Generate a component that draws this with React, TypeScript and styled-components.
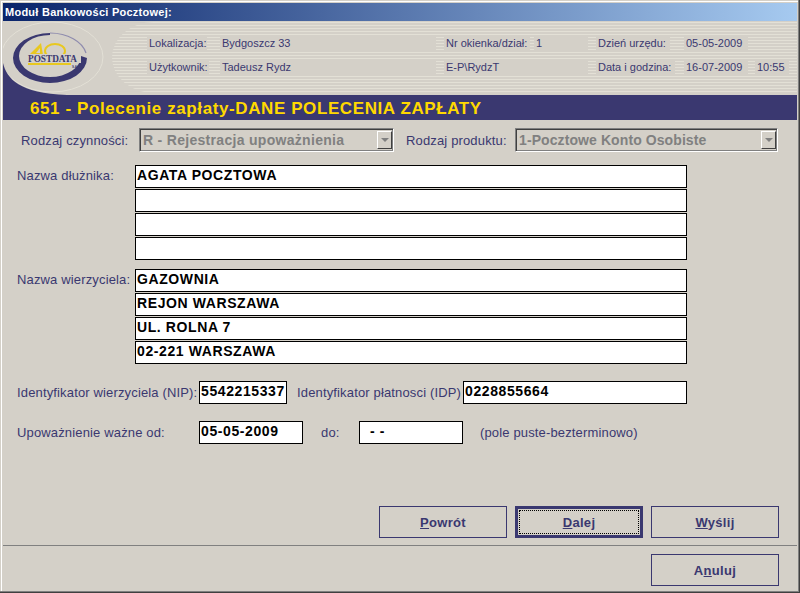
import styled, { createGlobalStyle } from "styled-components";

const NAVY = "#3a3870";
const FACE = "#d4d0c8";

const GlobalStyle = createGlobalStyle`
  html, body {
    margin: 0;
    padding: 0;
    background: ${FACE};
  }
  * {
    box-sizing: border-box;
  }
`;

const Window = styled.div`
  width: 800px;
  height: 593px;
  padding: 3px;
  display: flex;
  flex-direction: column;
  background: ${FACE};
  font-family: "Liberation Sans", Arial, sans-serif;
  overflow: hidden;
  box-shadow:
    inset -1px -1px 0 #404040,
    inset -2px -2px 0 #808080,
    inset 1px 1px 0 ${FACE},
    inset 2px 2px 0 #ffffff;
`;

const TitleBar = styled.div`
  height: 18px;
  flex: none;
  padding: 0 2px;
  display: flex;
  align-items: center;
  color: #fff;
  font-size: 11px;
  font-weight: bold;
  letter-spacing: 0.25px;
  background: linear-gradient(90deg, #0a246a, #a6caf0);
`;

const Header = styled.div`
  position: relative;
  height: 74px;
  flex: none;
  padding: 15px 0 0 144px;
  display: flex;
  flex-direction: column;
  gap: 9px;
`;

const Stripes = styled.div`
  position: absolute;
  inset: 1px 0 2px 109px;
  border-radius: 42px 0 0 42px / 36px 0 0 36px;
  background: repeating-linear-gradient(
    180deg,
    #e3e0d6 0,
    #e3e0d6 1px,
    ${FACE} 1px,
    ${FACE} 3px
  );
`;

const LogoArt = styled.svg`
  position: absolute;
  left: 0;
  top: 0;
`;

const InfoRow = styled.div`
  position: relative;
  height: 15px;
  display: flex;
`;

const InfoCell = styled.div<{ $width: number; $gap: number }>`
  width: ${(p) => p.$width}px;
  margin-right: ${(p) => p.$gap}px;
  padding-left: 2px;
  flex: none;
  background: ${FACE};
  color: ${NAVY};
  font-size: 11px;
  line-height: 15px;
  white-space: nowrap;
`;

const Band = styled.div`
  height: 25px;
  flex: none;
  padding-left: 27px;
  background: ${NAVY};
  color: #ffd800;
  font-size: 17px;
  font-weight: bold;
  line-height: 27px;
  letter-spacing: 0.6px;
  white-space: nowrap;
`;

const Body = styled.div`
  flex: 1;
  display: flex;
  flex-direction: column;
  padding: 8px 0 0 14px;
`;

const SelectRow = styled.div`
  display: flex;
  align-items: center;
  height: 24px;
  padding-left: 4px;
  margin-bottom: 13px;
`;

const Label = styled.span<{ $width?: number; $indent?: number }>`
  ${(p) => (p.$width ? `width: ${p.$width}px; flex: none;` : "")}
  padding-left: ${(p) => p.$indent ?? 0}px;
  color: ${NAVY};
  font-size: 13px;
  letter-spacing: 0.15px;
  white-space: nowrap;
`;

const Select = styled.div<{ $width: number; $tracking: number }>`
  position: relative;
  width: ${(p) => p.$width}px;
  height: 24px;
  flex: none;
  padding-left: 3px;
  border: 1px solid;
  border-color: #808080 #ffffff #ffffff #808080;
  box-shadow:
    inset 1px 1px 0 #404040,
    inset -1px -1px 0 #808080;
  color: #808080;
  font-size: 14px;
  font-weight: bold;
  line-height: 23px;
  letter-spacing: ${(p) => p.$tracking}px;
  white-space: nowrap;
`;

const SelectArrow = styled.span`
  position: absolute;
  right: 1px;
  top: 2px;
  bottom: 2px;
  width: 15px;
  display: flex;
  align-items: center;
  justify-content: center;
  background: ${FACE};
  border: 1px solid;
  border-color: #ffffff #404040 #404040 #ffffff;
  &::after {
    content: "";
    border-top: 4px solid #808080;
    border-left: 4px solid transparent;
    border-right: 4px solid transparent;
  }
`;

const FieldGroup = styled.div<{ $after: number }>`
  display: flex;
  margin-bottom: ${(p) => p.$after}px;
`;

const FieldStack = styled.div`
  display: flex;
  flex-direction: column;
  gap: 1px;
`;

const GroupLabel = styled(Label)`
  width: 118px;
  flex: none;
  line-height: 22px;
`;

const Field = styled.div<{ $width: number }>`
  width: ${(p) => p.$width}px;
  height: 23px;
  flex: none;
  padding-left: 1px;
  background: #fff;
  border: 1px solid #000;
  color: #000;
  font-size: 14px;
  font-weight: bold;
  line-height: 19px;
  letter-spacing: 0.6px;
  white-space: pre;
`;

const InlineRow = styled.div<{ $after?: number }>`
  display: flex;
  align-items: center;
  height: 23px;
  margin-bottom: ${(p) => p.$after ?? 0}px;
`;

const ActionRow = styled.div`
  display: flex;
  justify-content: flex-end;
  gap: 8px;
  margin-left: -14px;
  padding-right: 18px;
`;

const PrimaryActions = styled(ActionRow)`
  margin-top: auto;
  padding-bottom: 7px;
  border-bottom: 1px solid #808080;
`;

const CancelActions = styled(ActionRow)`
  padding-top: 8px;
  padding-bottom: 4px;
`;

const Button = styled.button<{ $default?: boolean }>`
  position: relative;
  width: 128px;
  height: 32px;
  padding: 0;
  background: ${FACE};
  border: ${(p) => (p.$default ? 3 : 1)}px solid ${NAVY};
  color: ${NAVY};
  font-family: inherit;
  font-size: 13px;
  font-weight: bold;
  letter-spacing: 0.3px;
  ${(p) =>
    p.$default
      ? `&::after {
    content: "";
    position: absolute;
    inset: 0;
    margin: 1px;
    border: 1px dotted #000;
  }`
      : ""}
`;

function Logo() {
  return (
    <LogoArt width="112" height="74" viewBox="0 0 112 74">
      <ellipse cx="49" cy="36" rx="51" ry="35" fill={FACE} stroke="#e3e0d6" strokeWidth="1" />
      <path d="M0 42 C4 58 16 72 64 74 L0 74 Z" fill={NAVY} />
      <path d="M84 37 A37 25 0 1 1 47 12 L47 14 A31 21 0 1 0 78 35 Z" fill={NAVY} />
      <path d="M47 12 A37 25 0 0 1 83 32" fill="none" stroke="#8f8cae" strokeWidth="1.2" />
      <path d="M26 34 L38 22 L40 34 Z" fill="#e8c820" />
      <path d="M33 32 L37 27 L37 32 Z" fill={FACE} />
      <ellipse cx="52" cy="30" rx="10" ry="7" fill="none" stroke="#e8c820" strokeWidth="2" />
      <rect x="26" y="33" width="52" height="9" fill={FACE} />
      <text
        x="25"
        y="41"
        fill={NAVY}
        fontFamily="'Liberation Serif', serif"
        fontSize="10"
        fontWeight="bold"
        textLength="49"
        lengthAdjust="spacingAndGlyphs"
      >
        POSTDATA
      </text>
      <rect x="25" y="42" width="43" height="2" fill="#e8c820" />
      <text x="69" y="47" fill={NAVY} fontFamily="'Liberation Sans', sans-serif" fontSize="3" fontWeight="bold">
        S.A.
      </text>
    </LogoArt>
  );
}

export default function App() {
  return (
    <Window>
      <GlobalStyle />
      <TitleBar>Moduł Bankowości Pocztowej:</TitleBar>
      <Header>
        <Stripes />
        <Logo />
        <InfoRow>
          <InfoCell $width={60} $gap={13}>Lokalizacja:</InfoCell>
          <InfoCell $width={216} $gap={8}>Bydgoszcz 33</InfoCell>
          <InfoCell $width={86} $gap={4}>Nr okienka/dział:</InfoCell>
          <InfoCell $width={54} $gap={8}>1</InfoCell>
          <InfoCell $width={74} $gap={14}>Dzień urzędu:</InfoCell>
          <InfoCell $width={64} $gap={9}>05-05-2009</InfoCell>
        </InfoRow>
        <InfoRow>
          <InfoCell $width={62} $gap={11}>Użytkownik:</InfoCell>
          <InfoCell $width={216} $gap={8}>Tadeusz Rydz</InfoCell>
          <InfoCell $width={144} $gap={8}>E-P\RydzT</InfoCell>
          <InfoCell $width={79} $gap={9}>Data i godzina:</InfoCell>
          <InfoCell $width={64} $gap={7}>16-07-2009</InfoCell>
          <InfoCell $width={34} $gap={0}>10:55</InfoCell>
        </InfoRow>
      </Header>
      <Band>651 - Polecenie zapłaty-DANE POLECENIA ZAPŁATY</Band>
      <Body>
        <SelectRow>
          <Label $width={118}>Rodzaj czynności:</Label>
          <Select $width={255} $tracking={0.3}>
            R - Rejestracja upoważnienia
            <SelectArrow />
          </Select>
          <Label $width={121} $indent={12}>Rodzaj produktu:</Label>
          <Select $width={263} $tracking={0.09}>
            1-Pocztowe Konto Osobiste
            <SelectArrow />
          </Select>
        </SelectRow>
        <FieldGroup $after={9}>
          <GroupLabel>Nazwa dłużnika:</GroupLabel>
          <FieldStack>
            <Field $width={552}>AGATA POCZTOWA</Field>
            <Field $width={552} />
            <Field $width={552} />
            <Field $width={552} />
          </FieldStack>
        </FieldGroup>
        <FieldGroup $after={17}>
          <GroupLabel>Nazwa wierzyciela:</GroupLabel>
          <FieldStack>
            <Field $width={552}>GAZOWNIA</Field>
            <Field $width={552}>REJON WARSZAWA</Field>
            <Field $width={552}>UL. ROLNA 7</Field>
            <Field $width={552}>02-221 WARSZAWA</Field>
          </FieldStack>
        </FieldGroup>
        <InlineRow $after={17}>
          <Label $width={182}>Identyfikator wierzyciela (NIP):</Label>
          <Field $width={88}>5542215337</Field>
          <Label $width={176} $indent={10}>Identyfikator płatnosci (IDP)</Label>
          <Field $width={224}>0228855664</Field>
        </InlineRow>
        <InlineRow>
          <Label $width={182}>Upoważnienie ważne od:</Label>
          <Field $width={104}>05-05-2009</Field>
          <Label $width={56} $indent={18}>do:</Label>
          <Field $width={104}>{"  - -"}</Field>
          <Label $indent={17}>(pole puste-bezterminowo)</Label>
        </InlineRow>
        <PrimaryActions>
          <Button><u>P</u>owrót</Button>
          <Button $default><u>D</u>alej</Button>
          <Button><u>W</u>yślij</Button>
        </PrimaryActions>
        <CancelActions>
          <Button>A<u>n</u>uluj</Button>
        </CancelActions>
      </Body>
    </Window>
  );
}
